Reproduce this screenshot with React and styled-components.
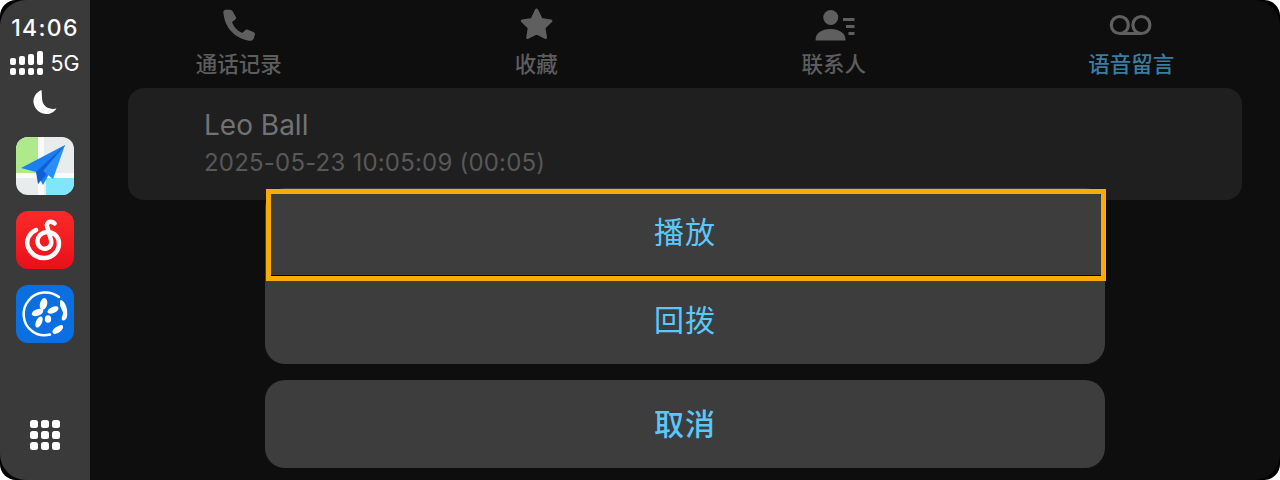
import React from "react";
import styled, { createGlobalStyle } from "styled-components";

const Global = createGlobalStyle`
  html, body { margin: 0; padding: 0; background: #fff; }
  #root { width: 1280px; height: 480px; overflow: hidden; }
`;
const CJK = `"Inter", "Noto Sans CJK SC", sans-serif`;

const Screen = styled.div`
  width: 1280px; height: 480px; display: flex; overflow: hidden; position: relative;
  border-radius: 16px; background: #000; font-family: ${CJK};
`;
const Side = styled.aside`
  width: 90px; flex: none; background: #3a3a3a; display: flex; flex-direction: column; align-items: center;
  border-radius: 26px 0 0 26px;
`;
const Time = styled.div`
  margin-top: 15px; color: #fff; font: 500 23px/26px "Inter", sans-serif; letter-spacing: 1.3px;
`;
const Signal = styled.div`
  display: flex; align-items: center; gap: 6px; margin-top: 9px; height: 26px;
`;
const Net = styled.span`
  color: #fff; font: 400 21.5px/26px "Inter", sans-serif;
`;
const Moon = styled.svg`
  margin-top: 13px; display: block;
`;
const Apps = styled.div`
  margin-top: 22px; display: flex; flex-direction: column; gap: 16px;
`;
const Grid = styled.svg`
  margin-top: auto; margin-bottom: 30px; display: block;
`;
const Main = styled.main`
  flex: 1; min-width: 0; display: flex; flex-direction: column; padding: 0 38px;
  background: #0e0e0e; border-radius: 0 26px 26px 0;
`;
const Tabs = styled.nav`
  height: 88px; display: grid; grid-template-columns: repeat(4, 1fr); margin: 0 -38px;
`;
const Tab = styled.div`
  display: flex; flex-direction: column; align-items: center; padding-top: 6px;
  color: #5f5f5f;
`;
const TabIcon = styled.svg`
  display: block; height: 36px; width: 44px;
`;
const TabLabel = styled.span`
  font: 500 21.5px/28px ${CJK}; margin-top: 8px;
  color: ${p => (p.$active ? "#3a7d9f" : "#5d5d5d")};
`;
const Card = styled.section`
  height: 112px; border-radius: 16px; background: #1f1f1f; padding: 19px 0 0 76px; box-sizing: border-box;
`;
const Name = styled.div`
  color: #727272; font: 400 28px/36px ${CJK};
`;
const Detail = styled.div`
  color: #585858; font: 400 24px/30px ${CJK}; margin-top: 5px; letter-spacing: 0.2px;
`;
const Sheet = styled.div`
  position: absolute; left: 265px; top: 188px; width: 840px; display: flex; flex-direction: column; gap: 16px;
`;
const Group = styled.div`
  background: #3d3d3d; border-radius: 20px; display: flex; flex-direction: column;
`;
const Action = styled.div`
  height: 88px; display: flex; align-items: center; justify-content: center; position: relative;
  color: #5ac8fa; font: ${p => (p.$bold ? 500 : 400)} 30px/40px ${CJK}; letter-spacing: 1px;
`;
const Focus = styled.div`
  position: absolute; left: 1px; right: -1px; top: 1px; bottom: -5px; box-sizing: border-box;
  border: 5px solid #fbab09; box-shadow: inset 0 -1px 0 #000;
`;

const Phone = () => (
  <TabIcon viewBox="0 0 44 36">
    <path transform="translate(22.25 19.5) scale(1.13 1) translate(-21.9 -18.25)" fill="currentColor" d="M10 2.5c-1.500.2-2.400 1.300-2.200 3C8.800 15 12 22 18 27.500c3.500 3 7.500 5 12.500 6 2 .3 3.500-.5 4.200-2l1-4c.3-1.300-.2-2.300-1.300-2.800l-4.800-2.200c-1-.4-2-.2-2.700.7l-1.600 1.800c-.5.500-1 .5-1.600.2-3.700-2.200-6.500-5.500-8-9.800-.2-.6 0-1.100.5-1.400l1.800-1.200c1-.7 1.300-1.700 1-2.700L16.500 5c-.4-1.500-1.500-2.500-3-2.500z" />
  </TabIcon>
);
const Star = () => (
  <TabIcon viewBox="0 0 44 36">
    <path transform="translate(0.6 0)" fill="currentColor" stroke="currentColor" strokeWidth="3" strokeLinejoin="round" d="M22 4l4.600 9.500 9.700 1.400-7 6.900 1.600 9.700-8.900-4.700-8.900 4.700 1.600-9.700-7-6.900 9.700-1.400z" />
  </TabIcon>
);
const Contact = () => (
  <TabIcon viewBox="0 0 44 36">
    <circle cx="18.750" cy="11.500" r="7.500" fill="currentColor" />
    <path fill="currentColor" d="M3.500 34c0-7 6-11 15-11s15 4 15 11c0 .4-.4.500-1 .5h-28c-.6 0-1-.1-1-.5z" />
    <path stroke="currentColor" strokeWidth="3" d="M31 13.500h11.500M34 20.500h8.500M36.500 27.500h6" />
  </TabIcon>
);
const Voicemail = () => (
  <TabIcon viewBox="0 0 44 36">
    <g fill="none" stroke="currentColor" strokeWidth="3.200">
      <circle cx="10.800" cy="19" r="8.500" /><circle cx="32.400" cy="19" r="8.500" /><path d="M10.800 27.500h21.600" />
    </g>
  </TabIcon>
);

const SignalIcon = () => (
  <svg width="34" height="24" viewBox="0 0 34 24">
    <g fill="#fff">
      <rect x="0" y="7" width="6" height="7" rx="2" /><rect x="9" y="5" width="6" height="9" rx="2" />
      <rect x="18" y="3" width="6" height="11" rx="2" /><rect x="27" y="0" width="6" height="14" rx="2" />
      <rect x="0" y="17" width="6" height="7" rx="2" /><rect x="9" y="17" width="6" height="7" rx="2" />
      <rect x="18" y="17" width="6" height="7" rx="2" /><rect x="27" y="17" width="6" height="7" rx="2" />
    </g>
  </svg>
);

const MapsApp = () => (
  <svg width="58" height="58" viewBox="0 0 58 58">
    <defs><clipPath id="m"><rect width="58" height="58" rx="12" /></clipPath></defs>
    <g clipPath="url(#m)">
      <rect width="58" height="58" fill="#e8eced" />
      <rect width="22" height="36" fill="#aeea8c" />
      <path d="M22 0h6v58h-6zM0 36h58v5H0z" fill="#fafafa" />
      <path d="M30 41h28v17H30z" fill="#7fe6fb" />
      <path d="M49 8L5 31l15 4 7 13z" fill="#1a7ff0" />
      <path d="M49 8L20 35l2 12 7-8z" fill="#0f5fd6" />
      <path d="M49 8L27 34l10 8z" fill="#2a8ff5" />
    </g>
  </svg>
);
const MusicApp = () => (
  <svg width="58" height="58" viewBox="0 0 58 58">
    <defs>
      <linearGradient id="r" x1="0" y1="0" x2="0" y2="1"><stop offset="0" stopColor="#fb2a28" /><stop offset="1" stopColor="#e9101a" /></linearGradient>
    </defs>
    <rect width="58" height="58" rx="12" fill="url(#r)" />
    <path fill="none" stroke="#fff" strokeWidth="4.500" strokeLinecap="round" d="M20 19C12 23 10 30 12 36c2.500 7 9.500 11.500 17 11 8-.5 14-7 14-14.500 0-7-6-12-12-11.500-6 .5-10 5-9.500 10 .5 5 5 7.500 9 6.500 4-1 5.500-5 4.500-8.500L31 15c-.5-3 2-5 5-4 1 .3 2 1 2.500 1.500" />
  </svg>
);
const PhoneApp = () => (
  <svg width="58" height="58" viewBox="0 0 58 58">
    <rect width="58" height="58" rx="12" fill="#0a6fe0" />
    <path fill="none" stroke="#fff" strokeWidth="2.500" strokeLinecap="round" d="M43 12C34 5 20 6 13 15 5 24 6 39 16 46c5 4 12 5 18 3.500" />
    <g fill="#fff">
      <ellipse cx="27.500" cy="19" rx="3.600" ry="6" transform="rotate(15 27.500 19)" />
      <ellipse cx="37" cy="25" rx="6" ry="3" transform="rotate(-25 37 25)" />
      <ellipse cx="21.500" cy="27.500" rx="6" ry="3.200" transform="rotate(-20 21.500 27.500)" />
      <ellipse cx="32" cy="34" rx="3.200" ry="3.800" />
      <ellipse cx="23" cy="37" rx="3" ry="6" transform="rotate(25 23 37)" />
      <path d="M45 15c5 2 7 10 6 17-1 3-3 4-5 3-1-3 1-4 1-7 0-3-3-5-3-9 0-2 0-4 1-4zM37 45c2-3 7-5 9-5 2 1 1 4-1 6-2 2-5 3-7 3-2-1-2-3-1-4z" />
    </g>
  </svg>
);

const GridIcon = () => (
  <Grid width="30" height="30" viewBox="0 0 30 30">
    <g fill="#fff">
      {[0, 11, 22].flatMap(y => [0, 11, 22].map(x => <rect key={x + "-" + y} x={x} y={y} width="8" height="8" rx="2.500" />))}
    </g>
  </Grid>
);

export default function App() {
  return (
    <>
      <Global />
      <Screen>
        <Side>
          <Time>14:06</Time>
          <Signal><SignalIcon /><Net>5G</Net></Signal>
          <Moon width="26" height="26" viewBox="0 0 26 26">
            <path fill="#fff" d="M9.500 1C3.500 3.500 1 9 1.500 13.500 2.500 20.500 8.500 25 14.500 25c4 0 8-2 10-5.500-7 1.500-12.500-1.500-14-7-.8-3.500-.5-7.500-1-11.500z" />
          </Moon>
          <Apps><MapsApp /><MusicApp /><PhoneApp /></Apps>
          <GridIcon />
        </Side>
        <Main>
          <Tabs>
            <Tab><Phone /><TabLabel>通话记录</TabLabel></Tab>
            <Tab><Star /><TabLabel>收藏</TabLabel></Tab>
            <Tab><Contact /><TabLabel>联系人</TabLabel></Tab>
            <Tab><Voicemail /><TabLabel $active>语音留言</TabLabel></Tab>
          </Tabs>
          <Card>
            <Name>Leo Ball</Name>
            <Detail>2025-05-23 10:05:09 (00:05)</Detail>
          </Card>
        </Main>
        <Sheet>
          <Group>
            <Action>播放<Focus /></Action>
            <Action>回拨</Action>
          </Group>
          <Group>
            <Action $bold>取消</Action>
          </Group>
        </Sheet>
      </Screen>
    </>
  );
}
